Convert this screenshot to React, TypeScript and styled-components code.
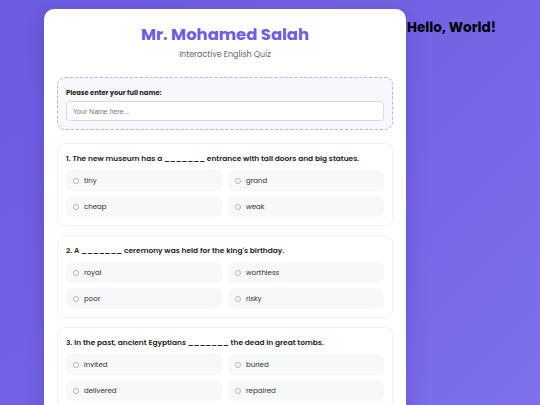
import React from "react";
import styled, { createGlobalStyle } from "styled-components";

const GlobalStyle = createGlobalStyle`
  html, body { margin: 0; padding: 0; }
  body {
    min-height: 100vh;
    background: linear-gradient(135deg, #6b5ce0 0%, #7566e6 60%, #7d70ea 100%);
    font-family: "Poppins", "Inter", "Noto Sans", sans-serif;
    color: #222;
  }
  * { box-sizing: border-box; }
`;

const Page = styled.div`
  display: flex;
  align-items: flex-start;
  padding: 9px 0 0 44px;
  height: 405px;
  overflow: hidden;
`;

const Container = styled.main`
  width: 362px;
  flex: none;
  background: #ffffff;
  border-radius: 10px;
  padding: 14px 13px 20px;
  box-shadow: 0 6px 20px rgba(40, 20, 120, 0.25);
`;

const Header = styled.header`
  text-align: center;
`;

const Title = styled.h1`
  margin: 0;
  font-size: 16.4px;
  line-height: 23px;
  font-weight: 700;
  color: #6c5ce7;
`;

const Subtitle = styled.p`
  margin: 1px 0 0;
  font-size: 8px;
  line-height: 15px;
  color: #666;
`;

const NameBox = styled.section`
  margin-top: 15px;
  border: 1px dashed #b9b0ee;
  border-radius: 8px;
  background: #f8f7fd;
  padding: 9px 8px 8px;
`;

const Label = styled.label`
  display: block;
  font-size: 6.7px;
  line-height: 11px;
  font-weight: 700;
  color: #222;
`;

const NameInput = styled.input`
  display: block;
  width: 100%;
  height: 20px;
  margin-top: 3px;
  border: 1px solid #dcdce0;
  border-radius: 4px;
  background: #fff;
  padding: 0 6px;
  font-family: "Liberation Sans", Arial, sans-serif;
  font-size: 7px;
  color: #333;
  outline: none;
  &::placeholder { color: #777; }
`;

const Card = styled.section<{ $first?: boolean }>`
  margin-top: ${(p) => (p.$first ? "13px" : "9px")};
  border: 1px solid #f0f0f4;
  border-radius: 8px;
  background: #fff;
  padding: 9px 8px 8px;
`;

const Question = styled.p`
  margin: 0;
  font-size: 7.45px;
  line-height: 11px;
  font-weight: 600;
  color: #222;
  white-space: nowrap;
`;

const Options = styled.div`
  display: grid;
  grid-template-columns: 1fr 1fr;
  grid-auto-rows: 21px;
  gap: 5px 6px;
  margin-top: 6px;
`;

const Option = styled.label`
  display: flex;
  align-items: center;
  gap: 5px;
  height: 21px;
  padding-left: 7px;
  border-radius: 6px;
  background: #f7f8fa;
  font-size: 7px;
  color: #333;
`;

const Radio = styled.span`
  width: 6px;
  height: 6px;
  border-radius: 50%;
  border: 1px solid #b5b5b5;
  background: #fff;
  flex: none;
`;

const Hello = styled.h1`
  margin: 9px 0 0 1px;
  font-size: 13.6px;
  line-height: 20px;
  font-weight: 700;
  color: #000;
  white-space: nowrap;
`;

const questions = [
  {
    text: "1. The new museum has a _______ entrance with tall doors and big statues.",
    options: ["tiny", "grand", "cheap", "weak"],
  },
  {
    text: "2. A _______ ceremony was held for the king's birthday.",
    options: ["royal", "worthless", "poor", "risky"],
  },
  {
    text: "3. In the past, ancient Egyptians _______ the dead in great tombs.",
    options: ["invited", "buried", "delivered", "repaired"],
  },
];

export default function App() {
  return (
    <>
      <GlobalStyle />
      <Page>
        <Container>
          <Header>
            <Title>Mr. Mohamed Salah</Title>
            <Subtitle>Interactive English Quiz</Subtitle>
          </Header>
          <NameBox>
            <Label htmlFor="name">Please enter your full name:</Label>
            <NameInput id="name" placeholder="Your Name here..." />
          </NameBox>
          {questions.map((q, i) => (
            <Card key={i} $first={i === 0}>
              <Question>{q.text}</Question>
              <Options>
                {q.options.map((o) => (
                  <Option key={o}>
                    <Radio />
                    {o}
                  </Option>
                ))}
              </Options>
            </Card>
          ))}
        </Container>
        <Hello>Hello, World!</Hello>
      </Page>
    </>
  );
}
